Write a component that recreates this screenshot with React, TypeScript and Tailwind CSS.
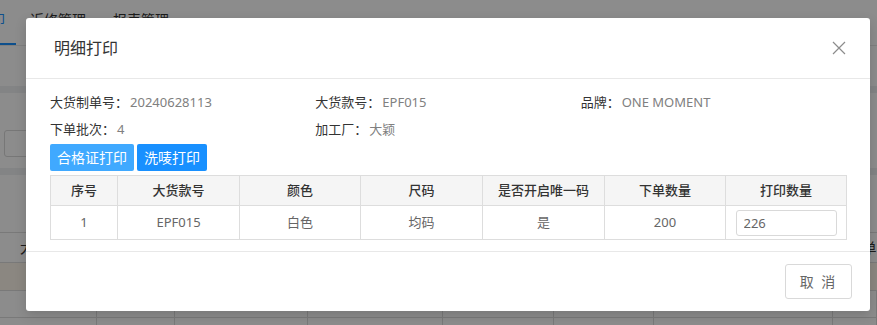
const info = [
  { label: "大货制单号：", value: "20240628113" },
  { label: "大货款号：", value: "EPF015" },
  { label: "品牌：", value: "ONE MOMENT" },
  { label: "下单批次：", value: "4" },
  { label: "加工厂：", value: "大颖" },
];

const columns = [
  { title: "序号", width: 67 },
  { title: "大货款号", width: 122 },
  { title: "颜色", width: 121 },
  { title: "尺码", width: 122 },
  { title: "是否开启唯一码", width: 122 },
  { title: "下单数量", width: 121 },
  { title: "打印数量", width: 121 },
];

const row = ["1", "EPF015", "白色", "均码", "是", "200"];

const bgCols = [97, 79, 134, 136, 112, 101, 181, 37];

function BackgroundPage() {
  return (
    <div className="flex flex-col text-[14px] text-[#333]">
      {/* tabs */}
      <div className="flex h-[46px] border-b border-[#e8e8e8]">
        <div className="-ml-[23px] h-full border-b-2 border-[#1890ff] pr-[11px] pt-[10px] leading-[20px] text-[#1890ff]">
          打印
        </div>
        <div className="ml-[14px] pt-[10px] leading-[20px]">近修管理</div>
        <div className="ml-[27px] pt-[10px] leading-[20px]">报表管理</div>
      </div>
      <div className="h-[40px] bg-white" />
      <div className="h-[7px] bg-[#eef0f3]" />
      {/* search card */}
      <div className="flex h-[75px] items-start bg-white pl-[4px] pt-[37px]">
        <div className="h-[27px] w-[160px] rounded-[3px] border border-[#d9d9d9]" />
      </div>
      <div className="h-[7px] bg-[#eef0f3]" />
      {/* list card */}
      <div className="h-[57px] bg-white" />
      <table className="table-fixed border-collapse">
        <colgroup>
          {bgCols.map((w, i) => (
            <col key={i} style={{ width: w }} />
          ))}
        </colgroup>
        <tbody>
          <tr className="h-[30px] border-y border-[#ddd]">
            <td className="text-center">大货款号</td>
            <td />
            <td />
            <td />
            <td />
            <td />
            <td />
            <td className="whitespace-nowrap pl-[30px]">单</td>
          </tr>
          <tr className="h-[28px] bg-[#fdf6ec]">
            {bgCols.map((_, i) => (
              <td key={i} />
            ))}
          </tr>
          <tr className="h-[27px] border-y border-[#ddd]">
            {bgCols.map((_, i) => (
              <td key={i} className="border-r border-[#ddd]" />
            ))}
          </tr>
          <tr className="h-[27px] border-y border-[#ddd]">
            {bgCols.map((_, i) => (
              <td key={i} className="border-r border-[#ddd]" />
            ))}
          </tr>
        </tbody>
      </table>
    </div>
  );
}

function CloseIcon() {
  return (
    <svg width="14" height="14" viewBox="0 0 14 14" className="text-[#8c8c8c]">
      <path d="M1 1 L13 13 M13 1 L1 13" stroke="currentColor" strokeWidth="1.2" fill="none" />
    </svg>
  );
}

export default function App() {
  return (
    <div className="relative h-[325px] w-[877px] overflow-hidden bg-white font-['Noto_Sans','Noto_Sans_CJK_SC',sans-serif]">
      <BackgroundPage />
      <div className="absolute inset-0 bg-black/45" />

      {/* modal */}
      <div className="absolute left-[26px] top-[18px] w-[844px] rounded-[3px] bg-white shadow-[0_4px_12px_rgba(0,0,0,0.15)]">
        <div className="flex h-[61px] items-center justify-between border-b border-[#e8e8e8] pl-[28px] pr-[24px]">
          <span className="text-[16px] text-[#333]">明细打印</span>
          <CloseIcon />
        </div>

        <div className="px-[24px] pb-[11px] pt-[13px]">
          <div className="grid grid-cols-3 gap-y-[7px] text-[13px] leading-[20px]">
            {info.map((item) => (
              <div key={item.label} className="whitespace-nowrap">
                <span className="text-[#333]">{item.label}</span>
                <span className="ml-[2px] text-[#808080]">{item.value}</span>
              </div>
            ))}
          </div>

          <div className="mt-[5px] flex gap-[3px]">
            <button className="h-[27px] rounded-[2px] bg-[#40a9ff] px-[7px] text-[14px] text-white">
              合格证打印
            </button>
            <button className="h-[27px] rounded-[2px] bg-[#1890ff] px-[7px] text-[14px] text-white">
              洗唛打印
            </button>
          </div>

          <table className="mt-[4px] w-full table-fixed border-collapse text-[13px]">
            <colgroup>
              {columns.map((c) => (
                <col key={c.title} style={{ width: c.width }} />
              ))}
            </colgroup>
            <thead>
              <tr className="h-[30px] bg-[#f5f5f5]">
                {columns.map((c) => (
                  <th key={c.title} className="border border-[#ddd] font-medium text-[#333]">
                    {c.title}
                  </th>
                ))}
              </tr>
            </thead>
            <tbody>
              <tr className="h-[34px]">
                {row.map((v, i) => (
                  <td key={i} className="border border-[#ddd] text-center text-[#666]">
                    {v}
                  </td>
                ))}
                <td className="border border-[#ddd] text-center">
                  <input
                    defaultValue="226"
                    className="h-[26px] w-[101px] rounded-[3px] border border-[#d9d9d9] px-[7px] text-[13px] text-[#666] outline-none"
                  />
                </td>
              </tr>
            </tbody>
          </table>
        </div>

        <div className="flex h-[60px] items-center justify-end border-t border-[#e8e8e8] pr-[18px]">
          <button className="h-[35px] w-[67px] rounded-[3px] border border-[#d9d9d9] bg-white text-[14px] tracking-[2px] text-[#666]">
            取 消
          </button>
        </div>
      </div>
    </div>
  );
}
